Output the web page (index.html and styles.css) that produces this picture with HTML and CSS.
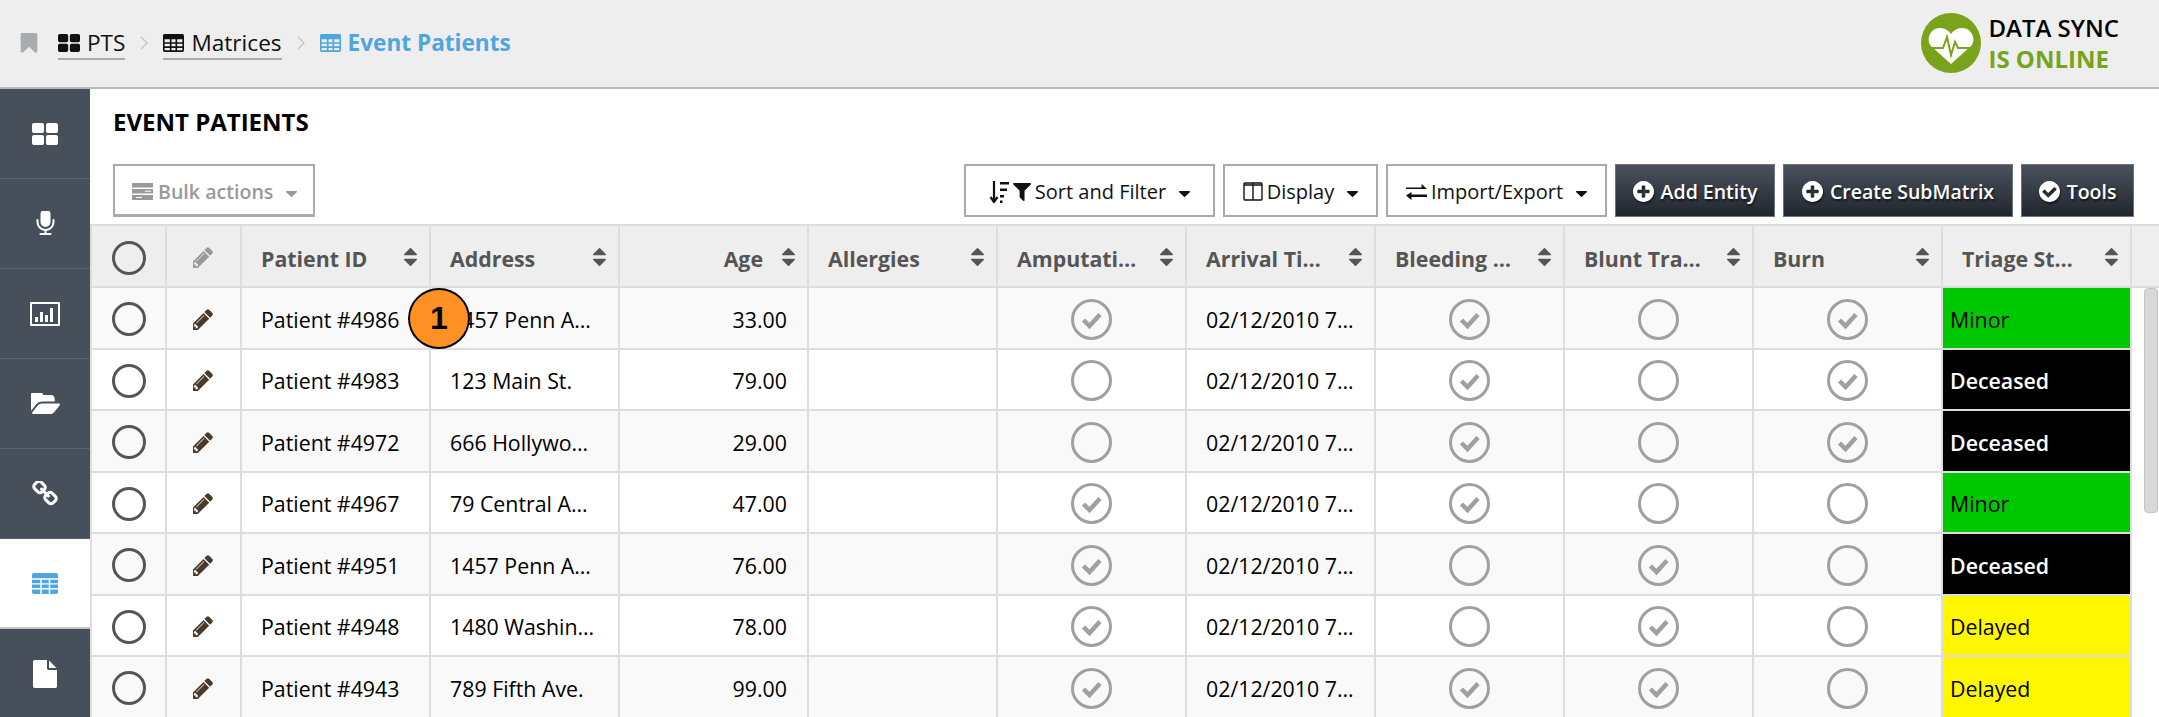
FILE: index.html
```html
<!DOCTYPE html>
<html lang="en">
<head>
<meta charset="utf-8">
<title>Event Patients</title>
<link rel="stylesheet" href="styles.css">
</head>
<body>
<svg class="defs" aria-hidden="true">
  <symbol id="i-bookmark" viewBox="256 128 1280 1536"><path d="M1420 128q23 0 44 9 33 13 52.5 41t19.5 62v1289q0 34-19.5 62t-52.5 41q-19 8-44 8-48 0-83-32l-441-424-441 424q-36 33-83 33-23 0-44-9-33-13-52.5-41t-19.5-62v-1289q0-34 19.5-62t52.5-41q21-9 44-9h1048z"/></symbol>
  <symbol id="i-large" viewBox="64 128 1664 1408" preserveAspectRatio="none"><path d="M832 1024v384q0 52-38 90t-90 38h-512q-52 0-90-38t-38-90v-384q0-52 38-90t90-38h512q52 0 90 38t38 90zm0-768v384q0 52-38 90t-90 38h-512q-52 0-90-38t-38-90v-384q0-52 38-90t90-38h512q52 0 90 38t38 90zm896 768v384q0 52-38 90t-90 38h-512q-52 0-90-38t-38-90v-384q0-52 38-90t90-38h512q52 0 90 38t38 90zm0-768v384q0 52-38 90t-90 38h-512q-52 0-90-38t-38-90v-384q0-52 38-90t90-38h512q52 0 90 38t38 90z"/></symbol>
  <symbol id="i-table" viewBox="0 0 26 22" preserveAspectRatio="none"><path fill-rule="evenodd" d="M2 0h22a2 2 0 0 1 2 2v18a2 2 0 0 1-2 2H2a2 2 0 0 1-2-2V2a2 2 0 0 1 2-2zM2 6.500v3.500h6.500V6.500zm8.500 0v3.500h5V6.500zm7 0v3.500H24V6.500zM2 12v3h6.500v-3zm8.500 0v3h5v-3zm7 0v3H24v-3zM2 17v3h6.500v-3zm8.500 0v3h5v-3zm7 0v3H24v-3z"/></symbol>
  <symbol id="i-cells" viewBox="0 0 26 22" preserveAspectRatio="none"><rect width="26" height="22" rx="2"/><path d="M0 6.200h26M0 11.400h26M0 16.500h26M9 6v16M17.500 6v16" stroke="#fff" stroke-width="1.500"/></symbol>
  <symbol id="i-pencil" viewBox="192 128 1536 1536"><path d="M491 1536l91-91-235-235-91 91v107h128v128h107zm523-928q0-22-22-22-10 0-17 7l-542 542q-7 7-7 17 0 22 22 22 10 0 17-7l542-542q7-7 7-17zm-54-192l416 416-832 832h-416v-416zm683 96q0 53-37 90l-166 166-416-416 166-165q36-38 90-38 53 0 91 38l235 234q37 39 37 91z"/></symbol>
  <symbol id="i-sort" viewBox="384 192 1024 1408" preserveAspectRatio="none"><path d="M1408 1088q0 26-19 45l-448 448q-19 19-45 19t-45-19l-448-448q-19-19-19-45t19-45 45-19h896q26 0 45 19t19 45zm0-384q0 26-19 45t-45 19h-896q-26 0-45-19t-19-45 19-45l448-448q19-19 45-19t45 19l448 448q19 19 19 45z"/></symbol>
  <symbol id="i-caret" viewBox="384 640 1024 576" preserveAspectRatio="none"><path d="M1408 704q0 26-19 45l-448 448q-19 19-45 19t-45-19l-448-448q-19-19-19-45t19-45 45-19h896q26 0 45 19t19 45z"/></symbol>
  <symbol id="i-filter" viewBox="190 256 1400 1408"><path d="M1595 295q17 41-14 70l-493 493v742q0 42-39 59-13 5-25 5-27 0-45-19l-256-256q-19-19-19-45v-486l-493-493q-31-29-14-70 17-39 59-39h1280q42 0 59 39z"/></symbol>
  <symbol id="i-plus" viewBox="128 128 1536 1536"><path d="M1344 960v-128q0-26-19-45t-45-19h-256v-256q0-26-19-45t-45-19h-128q-26 0-45 19t-19 45v256h-256q-26 0-45 19t-19 45v128q0 26 19 45t45 19h256v256q0 26 19 45t45 19h128q26 0 45-19t19-45v-256h256q26 0 45-19t19-45zm320-64q0 209-103 385.500t-279.500 279.500-385.500 103-385.500-103-279.500-279.500-103-385.500 103-385.500 279.500-279.500 385.500-103 385.500 103 279.500 279.500 103 385.500z"/></symbol>
  <symbol id="i-okay" viewBox="128 128 1536 1536"><path d="M1412 734q0-28-18-46l-91-90q-19-19-45-19t-45 19l-408 407-226-226q-19-19-45-19t-45 19l-91 90q-18 18-18 46 0 27 18 45l362 362q19 19 45 19 27 0 46-19l543-543q18-18 18-45zm252 162q0 209-103 385.500t-279.500 279.500-385.500 103-385.500-103-279.500-279.500-103-385.500 103-385.500 279.500-279.500 385.500-103 385.500 103 279.500 279.500 103 385.500z"/></symbol>
  <symbol id="i-folder" viewBox="0 256 1879 1280" preserveAspectRatio="none"><path d="M1879 952q0 31-31 66l-336 396q-43 51-120.500 86.500t-143.500 35.500h-1088q-34 0-60.500-13t-26.500-43q0-31 31-66l336-396q43-51 120.500-86.500t143.500-35.500h1088q34 0 60.500 13t26.500 43zm-343-344v160h-832q-94 0-197 47.500t-164 119.500l-337 396-5 6q0-4-.5-12.500t-.5-12.500v-960q0-92 66-158t158-66h320q92 0 158 66t66 158v32h544q92 0 158 66t66 158z"/></symbol>
  <symbol id="i-file" viewBox="128 0 1536 1792" preserveAspectRatio="none"><path d="M1152 512v-472q22 14 36 28l408 408q14 14 28 36h-472zm-128 32q0 40 28 68t68 28h544v1056q0 40-28 68t-68 28h-1344q-40 0-68-28t-28-68v-1600q0-40 28-68t68-28h800v544z"/></symbol>
  <symbol id="i-mic" viewBox="256 128 1216 1664"><path d="M1472 704v128q0 221-147.500 384.500t-364.500 187.500v132h256q26 0 45 19t19 45-19 45-45 19h-640q-26 0-45-19t-19-45 19-45 45-19h256v-132q-217-24-364.500-187.500t-147.500-384.500v-128q0-26 19-45t45-19 45 19 19 45v128q0 185 131.500 316.500t316.500 131.500 316.500-131.500 131.500-316.500v-128q0-26 19-45t45-19 45 19 19 45zm-256-384v512q0 132-94 226t-226 94-226-94-94-226v-512q0-132 94-226t226-94 226 94 94 226z"/></symbol>
  <symbol id="i-link" viewBox="64 192 1664 1408"><path d="M1520 1216q0-40-28-68l-208-208q-28-28-68-28-42 0-72 32 3 3 19 18.500t21.500 21.500 15 19 13 25.500 3.500 27.500q0 40-28 68t-68 28q-15 0-27.500-3.500t-25.500-13-19-15-21.500-21.500-18.500-19q-33 31-33 73 0 40 28 68l206 207q27 27 68 27 40 0 68-26l147-146q28-28 28-67zm-703-705q0-40-28-68l-206-207q-28-28-68-28-39 0-68 27l-147 146q-28 28-28 67 0 40 28 68l208 208q27 27 68 27 42 0 72-31-3-3-19-18.500t-21.500-21.500-15-19-13-25.500-3.500-27.500q0-40 28-68t68-28q15 0 27.500 3.500t25.500 13 19 15 21.500 21.500 18.500 19q33-31 33-73zm895 705q0 120-85 203l-147 146q-83 83-203 83-121 0-204-85l-206-207q-83-83-83-203 0-123 88-209l-88-88q-86 88-208 88-120 0-204-84l-208-208q-84-84-84-204t85-203l147-146q83-83 203-83 121 0 204 85l206 207q83 83 83 203 0 123-88 209l88 88q86-88 208-88 120 0 204 84l208 208q84 84 84 204z"/></symbol>
  <symbol id="i-chart" viewBox="0 0 30 24"><path fill-rule="evenodd" d="M1 0h28a1 1 0 0 1 1 1v22a1 1 0 0 1-1 1H1a1 1 0 0 1-1-1V1a1 1 0 0 1 1-1zM2 2v20h26V2z"/><path d="M5 15h3v5H5zM10 10h3v10h-3zM15 13h3v7h-3zM20 6h3v14h-3z"/></symbol>
  <symbol id="i-bulk" viewBox="0 0 21 17" preserveAspectRatio="none"><path d="M0 0h21v4.500H0zM0 6h21v4.500H0zM0 12h21v5H0z"/><path d="M13 8.200h6M4 14.500h6" stroke="#fff" stroke-width="1"/></symbol>
  <symbol id="i-sortlist" viewBox="0 0 20 22" preserveAspectRatio="none"><path d="M5 0v19M1.500 16l3.500 5 3.500-5" fill="none" stroke="currentColor" stroke-width="2.200"/><path d="M11 1h9v2.600h-9zM11 7.500h7v2.600h-7zM11 14h4v2.600h-4zM11 19.500h2.500V22H11z"/></symbol>
  <symbol id="i-columns" viewBox="0 0 20 19" preserveAspectRatio="none"><path d="M2 1h16a1 1 0 0 1 1 1v15a1 1 0 0 1-1 1H2a1 1 0 0 1-1-1V2a1 1 0 0 1 1-1zM10 1v17M1 3h18" fill="none" stroke="currentColor" stroke-width="1.400"/></symbol>
  <symbol id="i-exchange" viewBox="0 0 21 16" preserveAspectRatio="none"><path d="M0 3.500h15.500V0L21 5H0zM21 10.500H5.500V8L0 11.500 5.500 16v-3H21z"/></symbol>
  <symbol id="i-check" viewBox="0 0 41 41"><circle cx="20.500" cy="20.500" r="19" fill="none" stroke="#a0a0a0" stroke-width="3"/><path d="M12.500 21l6 6 10.500-11.500" fill="none" stroke="#a0a0a0" stroke-width="4.500"/></symbol>
  <symbol id="i-empty" viewBox="0 0 41 41"><circle cx="20.500" cy="20.500" r="19" fill="none" stroke="#a0a0a0" stroke-width="3"/></symbol>
  <symbol id="i-radio" viewBox="0 0 34 34"><circle cx="17" cy="17" r="15.500" fill="none" stroke="#555" stroke-width="3"/></symbol>
</svg>

<header class="topbar">
  <nav class="crumbs">
    <svg class="ic-bookmark"><use href="#i-bookmark"/></svg>
    <a class="crumb"><svg class="ic-crumb"><use href="#i-large"/></svg>PTS</a>
    <svg class="chev" viewBox="0 0 8 14"><path d="M1 1l6 6-6 6"/></svg>
    <a class="crumb"><svg class="ic-crumb ic-crumb-table"><use href="#i-table"/></svg>Matrices</a>
    <svg class="chev" viewBox="0 0 8 14"><path d="M1 1l6 6-6 6"/></svg>
    <span class="crumb-current"><svg class="ic-crumb ic-crumb-table"><use href="#i-table"/></svg>Event Patients</span>
  </nav>
  <div class="sync">
    <svg class="sync-logo" viewBox="0 0 60 60">
      <circle cx="30" cy="30" r="30" fill="#7aa31c"/>
      <path d="M30 51 L10 33 C5 28 8 15 19 15 C24 15 28 18 30 21 C32 18 36 15 41 15 C52 15 55 28 50 33Z" fill="#fff"/>
      <path d="M6 35 H22 L26 24 L30 42 L34 29 L37 35 H54" fill="none" stroke="#7aa31c" stroke-width="2"/>
    </svg>
    <div class="sync-text"><span>DATA SYNC</span><strong>IS ONLINE</strong></div>
  </div>
</header>

<div class="shell">
  <aside class="side">
    <a class="side-item"><svg class="s-large"><use href="#i-large"/></svg></a>
    <a class="side-item"><svg class="s-mic"><use href="#i-mic"/></svg></a>
    <a class="side-item"><svg class="s-chart"><use href="#i-chart"/></svg></a>
    <a class="side-item"><svg class="s-folder"><use href="#i-folder"/></svg></a>
    <a class="side-item"><svg class="s-link"><use href="#i-link"/></svg></a>
    <a class="side-item active"><svg class="s-table"><use href="#i-cells"/></svg></a>
    <a class="side-item"><svg class="s-file"><use href="#i-file"/></svg></a>
  </aside>

  <main class="content">
    <h1 class="title">EVENT PATIENTS</h1>
    <div class="toolbar">
      <button class="btn btn-muted"><svg class="b-bulk"><use href="#i-bulk"/></svg>Bulk actions<svg class="caret"><use href="#i-caret"/></svg></button>
      <div class="spacer"></div>
      <button class="btn w-sort"><svg class="b-sortlist"><use href="#i-sortlist"/></svg><svg class="b-filter"><use href="#i-filter"/></svg>Sort and Filter<svg class="caret"><use href="#i-caret"/></svg></button>
      <button class="btn w-display"><svg class="b-columns"><use href="#i-columns"/></svg>Display<svg class="caret"><use href="#i-caret"/></svg></button>
      <button class="btn w-import"><svg class="b-exchange"><use href="#i-exchange"/></svg>Import/Export<svg class="caret"><use href="#i-caret"/></svg></button>
      <button class="btn btn-dark w-add"><svg class="b-circle"><use href="#i-plus"/></svg>Add Entity</button>
      <button class="btn btn-dark w-create"><svg class="b-circle"><use href="#i-plus"/></svg>Create SubMatrix</button>
      <button class="btn btn-dark w-tools"><svg class="b-circle"><use href="#i-okay"/></svg>Tools</button>
    </div>

    <div class="grid-wrap">
      <table class="grid">
        <colgroup>
          <col class="c-radio"><col class="c-edit">
          <col class="c-data"><col class="c-data"><col class="c-data"><col class="c-data"><col class="c-data">
          <col class="c-data"><col class="c-data"><col class="c-data"><col class="c-data"><col class="c-data">
          <col class="c-rest">
        </colgroup>
        <thead>
          <tr>
            <th class="center"><svg class="radio"><use href="#i-radio"/></svg></th>
            <th class="center"><svg class="pencil pencil-head"><use href="#i-pencil"/></svg></th>
            <th><span>Patient ID</span><svg class="sort"><use href="#i-sort"/></svg></th>
            <th><span>Address</span><svg class="sort"><use href="#i-sort"/></svg></th>
            <th class="right"><span>Age</span><svg class="sort"><use href="#i-sort"/></svg></th>
            <th><span>Allergies</span><svg class="sort"><use href="#i-sort"/></svg></th>
            <th><span>Amputati…</span><svg class="sort"><use href="#i-sort"/></svg></th>
            <th><span>Arrival Ti…</span><svg class="sort"><use href="#i-sort"/></svg></th>
            <th><span>Bleeding …</span><svg class="sort"><use href="#i-sort"/></svg></th>
            <th><span>Blunt Tra…</span><svg class="sort"><use href="#i-sort"/></svg></th>
            <th><span>Burn</span><svg class="sort"><use href="#i-sort"/></svg></th>
            <th><span>Triage St…</span><svg class="sort"><use href="#i-sort"/></svg></th>
            <th class="rest"></th>
          </tr>
        </thead>
        <tbody>
          <tr>
            <td class="center"><svg class="radio"><use href="#i-radio"/></svg></td>
            <td class="center"><svg class="pencil"><use href="#i-pencil"/></svg></td>
            <td>Patient #4986</td><td>1457 Penn A…</td><td class="right">33.00</td><td></td>
            <td class="center"><svg class="mark"><use href="#i-check"/></svg></td>
            <td>02/12/2010 7…</td>
            <td class="center"><svg class="mark"><use href="#i-check"/></svg></td>
            <td class="center"><svg class="mark"><use href="#i-empty"/></svg></td>
            <td class="center"><svg class="mark"><use href="#i-check"/></svg></td>
            <td class="triage minor">Minor</td><td class="rest"></td>
          </tr>
          <tr>
            <td class="center"><svg class="radio"><use href="#i-radio"/></svg></td>
            <td class="center"><svg class="pencil"><use href="#i-pencil"/></svg></td>
            <td>Patient #4983</td><td>123 Main St.</td><td class="right">79.00</td><td></td>
            <td class="center"><svg class="mark"><use href="#i-empty"/></svg></td>
            <td>02/12/2010 7…</td>
            <td class="center"><svg class="mark"><use href="#i-check"/></svg></td>
            <td class="center"><svg class="mark"><use href="#i-empty"/></svg></td>
            <td class="center"><svg class="mark"><use href="#i-check"/></svg></td>
            <td class="triage deceased">Deceased</td><td class="rest"></td>
          </tr>
          <tr>
            <td class="center"><svg class="radio"><use href="#i-radio"/></svg></td>
            <td class="center"><svg class="pencil"><use href="#i-pencil"/></svg></td>
            <td>Patient #4972</td><td>666 Hollywo…</td><td class="right">29.00</td><td></td>
            <td class="center"><svg class="mark"><use href="#i-empty"/></svg></td>
            <td>02/12/2010 7…</td>
            <td class="center"><svg class="mark"><use href="#i-check"/></svg></td>
            <td class="center"><svg class="mark"><use href="#i-empty"/></svg></td>
            <td class="center"><svg class="mark"><use href="#i-check"/></svg></td>
            <td class="triage deceased">Deceased</td><td class="rest"></td>
          </tr>
          <tr>
            <td class="center"><svg class="radio"><use href="#i-radio"/></svg></td>
            <td class="center"><svg class="pencil"><use href="#i-pencil"/></svg></td>
            <td>Patient #4967</td><td>79 Central A…</td><td class="right">47.00</td><td></td>
            <td class="center"><svg class="mark"><use href="#i-check"/></svg></td>
            <td>02/12/2010 7…</td>
            <td class="center"><svg class="mark"><use href="#i-check"/></svg></td>
            <td class="center"><svg class="mark"><use href="#i-empty"/></svg></td>
            <td class="center"><svg class="mark"><use href="#i-empty"/></svg></td>
            <td class="triage minor">Minor</td><td class="rest"></td>
          </tr>
          <tr>
            <td class="center"><svg class="radio"><use href="#i-radio"/></svg></td>
            <td class="center"><svg class="pencil"><use href="#i-pencil"/></svg></td>
            <td>Patient #4951</td><td>1457 Penn A…</td><td class="right">76.00</td><td></td>
            <td class="center"><svg class="mark"><use href="#i-check"/></svg></td>
            <td>02/12/2010 7…</td>
            <td class="center"><svg class="mark"><use href="#i-empty"/></svg></td>
            <td class="center"><svg class="mark"><use href="#i-check"/></svg></td>
            <td class="center"><svg class="mark"><use href="#i-empty"/></svg></td>
            <td class="triage deceased">Deceased</td><td class="rest"></td>
          </tr>
          <tr>
            <td class="center"><svg class="radio"><use href="#i-radio"/></svg></td>
            <td class="center"><svg class="pencil"><use href="#i-pencil"/></svg></td>
            <td>Patient #4948</td><td>1480 Washin…</td><td class="right">78.00</td><td></td>
            <td class="center"><svg class="mark"><use href="#i-check"/></svg></td>
            <td>02/12/2010 7…</td>
            <td class="center"><svg class="mark"><use href="#i-empty"/></svg></td>
            <td class="center"><svg class="mark"><use href="#i-check"/></svg></td>
            <td class="center"><svg class="mark"><use href="#i-empty"/></svg></td>
            <td class="triage delayed">Delayed</td><td class="rest"></td>
          </tr>
          <tr>
            <td class="center"><svg class="radio"><use href="#i-radio"/></svg></td>
            <td class="center"><svg class="pencil"><use href="#i-pencil"/></svg></td>
            <td>Patient #4943</td><td>789 Fifth Ave.</td><td class="right">99.00</td><td></td>
            <td class="center"><svg class="mark"><use href="#i-check"/></svg></td>
            <td>02/12/2010 7…</td>
            <td class="center"><svg class="mark"><use href="#i-check"/></svg></td>
            <td class="center"><svg class="mark"><use href="#i-check"/></svg></td>
            <td class="center"><svg class="mark"><use href="#i-empty"/></svg></td>
            <td class="triage delayed">Delayed</td><td class="rest"></td>
          </tr>
        </tbody>
      </table>
      <div class="thumb"></div>
      <div class="badge">1</div>
    </div>
  </main>
</div>
</body>
</html>
```

FILE: styles.css
```css
* { box-sizing: border-box; }
html, body { margin: 0; padding: 0; height: 717px; overflow: hidden; background: #fff; }
body { font-family: "Open Sans", sans-serif; font-size: 21.33px; color: #000; }
svg { display: block; fill: currentColor; flex: none; }
.defs { position: absolute; width: 0; height: 0; }

.topbar { height: 89px; background: #eee; border-bottom: 2px solid #b9b9b9; display: flex; align-items: center; justify-content: space-between; padding: 0 40px 2px 20px; }
.crumbs { display: flex; align-items: center; font-size: 22.6px; line-height: 30px; }
.ic-bookmark { width: 18px; height: 20px; color: #aaabaf; margin-right: 20px; }
.crumb { display: flex; align-items: center; gap: 7px; border-bottom: 2px solid #aaa; margin-top: 2px; color: #111; }
.ic-crumb { width: 22px; height: 18px; }
.ic-crumb-table { width: 21px; }
.chev { width: 8px; height: 14px; margin: 0 15px; fill: none; stroke: #c8c8c8; stroke-width: 1.5; }
.crumb-current { display: flex; align-items: center; gap: 7px; color: #4fa5e0; font-weight: 700; }

.sync { display: flex; align-items: center; gap: 7px; }
.sync-logo { width: 60px; height: 60px; }
.sync-text { display: flex; flex-direction: column; font-size: 24px; line-height: 31px; font-weight: 600; }
.sync-text strong { color: #7aa31c; font-weight: 700; }

.shell { display: flex; height: 628px; }
.side { width: 90px; background: #474f5a; flex: none; }
.side-item { height: 90px; display: flex; align-items: center; justify-content: center; border-bottom: 1px solid #5a626c; color: #fff; }
.side-item.active { background: #fff; color: #4fa5e0; border-bottom: 2px solid #c4c4c4; }
.s-large { width: 26px; height: 22px; }
.s-mic { width: 20px; height: 26px; }
.s-chart { width: 30px; height: 24px; }
.s-folder { width: 29px; height: 21px; }
.s-link { width: 26px; height: 25px; }
.s-table { width: 26px; height: 21px; }
.s-file { width: 24px; height: 28px; }

.content { flex: 1; min-width: 0; display: flex; flex-direction: column; }
.title { margin: 0; height: 75px; padding: 18px 0 0 23px; font-size: 24px; line-height: 30px; font-weight: 700; }
.toolbar { display: flex; gap: 8px; height: 53px; padding: 0 25px 0 23px; font-size: 20px; }
.spacer { flex: 1; }
.btn { font: inherit; height: 53px; padding: 2px 4px 0; display: flex; align-items: center; justify-content: center; background: #fff; color: #111; border: 2px solid #aaa; border-radius: 0; white-space: nowrap; }
.btn-muted { width: 202px; padding-left: 17px; color: #999; font-weight: 600; font-size: 19.6px; justify-content: flex-start; border-bottom-width: 3px; }
.btn-dark { background: linear-gradient(#4b525e, #21262e); border: 1px solid #6d737c; color: #fff; font-weight: 600; font-size: 19.5px; text-shadow: 1px 2px 2px rgba(0,0,0,.6); }
.w-sort { width: 251px; }
.w-display { width: 155px; }
.w-import { width: 221px; }
.w-add { width: 160px; }
.w-create { width: 230px; }
.w-tools { width: 113px; }
.caret { width: 11px; height: 6px; margin: 5px 0 0 13px; }
.b-bulk { width: 21px; height: 17px; margin-right: 5px; }
.b-sortlist { width: 20px; height: 22px; margin-right: 4px; }
.b-filter { width: 18px; height: 18px; margin-right: 4px; }
.b-columns { width: 20px; height: 19px; margin-right: 4px; }
.b-exchange { width: 21px; height: 16px; margin-right: 4px; }
.b-circle { width: 21px; height: 21px; margin-right: 7px; filter: drop-shadow(1px 2px 1px rgba(0,0,0,.5)); }

.grid-wrap { position: relative; margin-top: 7px; flex: 1; overflow: hidden; border-left: 2px solid #ddd; }
.grid { border-collapse: separate; border-spacing: 0; table-layout: fixed; width: 2067px; }
.c-radio { width: 75px; }
.c-edit { width: 75px; }
.c-data { width: 189px; }
.c-rest { width: 27px; }
th, td { height: 61.5px; padding: 3px 20px 0 19px; text-align: left; vertical-align: middle; white-space: nowrap; border-right: 2px solid #ddd; border-bottom: 2px solid #ddd; overflow: hidden; font-weight: 400; }
thead th { position: relative; background: #eee; color: #555; font-weight: 700; border-top: 2px solid #ddd; height: 64px; padding: 4px 44px 0 19px; }
tbody tr:nth-child(odd) td { background: #f9f9f9; }
th.center, td.center { padding: 3px 0 0; }
th.right, td.right { text-align: right; }
.center svg { margin: 0 auto; }
.radio { width: 34px; height: 34px; }
.mark { width: 41px; height: 41px; }
.pencil { width: 21px; height: 21px; color: #4a3a2c; }
.pencil-head { color: #999; }
.sort { position: absolute; right: 12px; top: 22px; width: 13px; height: 18px; color: #555; }
th.rest, td.rest { border-right: 0; padding: 0; }
td.rest { border-bottom: 0; }
tbody tr:nth-child(odd) td.rest { background: #fff; }
td.triage { padding-left: 7px; }
.minor { background: #00c800 !important; color: #000; }
.deceased { background: #000 !important; color: #fff; font-weight: 600; }
.delayed { background: #fff700 !important; color: #000; }

.thumb { position: absolute; left: 2052px; top: 64px; width: 14px; height: 225px; background: #d8d8d8; border: 1px solid #c4c4c4; border-radius: 4px; }
.badge { position: absolute; left: 316px; top: 64px; width: 62px; height: 61px; border-radius: 50%; background: #ff9124; border: 2px solid #000; display: flex; align-items: center; justify-content: center; font-family: "Liberation Sans", sans-serif; font-weight: 700; font-size: 32px; color: #000; }
```
